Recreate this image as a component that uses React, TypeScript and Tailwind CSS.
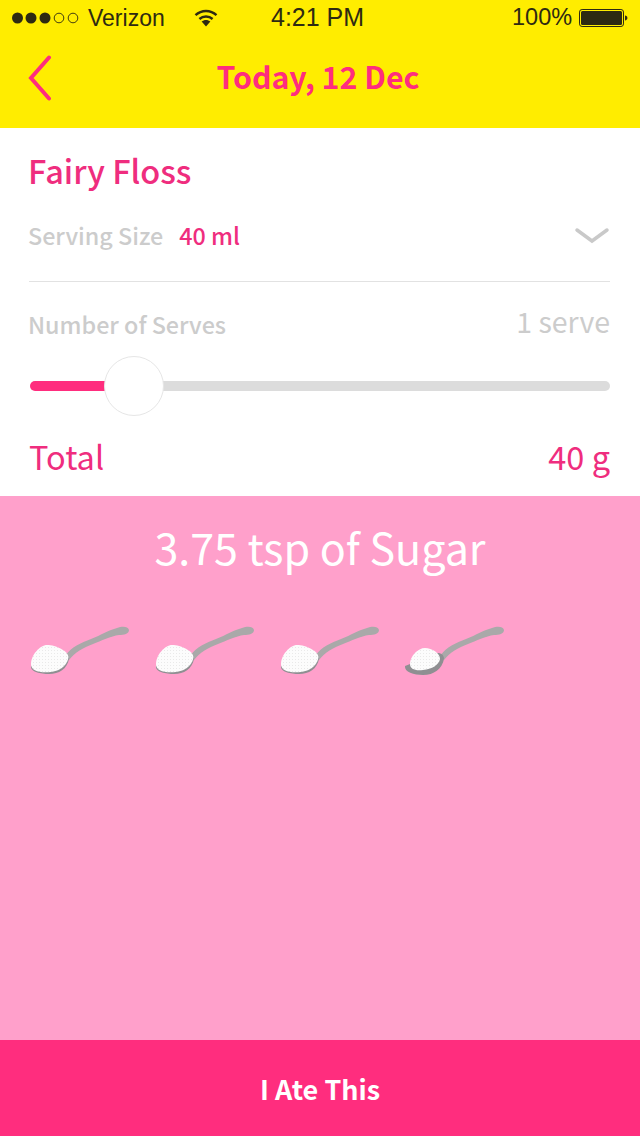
import { useId } from 'react'

const sans = 'font-["Noto_Sans_CJK_JP","Noto_Sans",sans-serif]'

function Dots() {
  const filled = [17.5, 31, 45]
  const empty = [59, 73]
  return (
    <svg width="69" height="14" viewBox="12 0 69 14" className="block">
      {filled.map((x) => (
        <circle key={x} cx={x} cy="7" r="5.5" fill="#2e2a12" />
      ))}
      {empty.map((x) => (
        <circle key={x} cx={x} cy="7" r="4.8" fill="none" stroke="#2e2a12" strokeWidth="0.9" />
      ))}
    </svg>
  )
}

function Wifi() {
  return (
    <svg width="24" height="18" viewBox="0 0 24 18" className="block">
      <path d="M1.500 6.200C7.500 .6 16.500 .6 22.500 6.200" fill="none" stroke="#2e2a12" strokeWidth="2.400" />
      <path d="M5.400 10C9.200 6.600 14.800 6.600 18.600 10" fill="none" stroke="#2e2a12" strokeWidth="2.400" />
      <path d="M7.600 12.600C10.200 10.400 13.800 10.400 16.400 12.600L12 17.600Z" fill="#2e2a12" />
    </svg>
  )
}

function Battery() {
  return (
    <svg width="49" height="20" viewBox="0 0 49 20" className="block">
      <rect x="0.500" y="1.500" width="44" height="17" rx="2.600" fill="none" stroke="#2e2a12" strokeWidth="1" />
      <rect x="2" y="3" width="41" height="14" rx="1.500" fill="#2e2a12" />
      <path d="M46 7.500c1.500.3 2.400 1.200 2.400 2.500s-.9 2.200-2.400 2.500Z" fill="#2e2a12" />
    </svg>
  )
}

// the last spoon is only 3/4 full: smaller heap, more of the bowl showing
function Spoon({ partial = false }: { partial?: boolean }) {
  const id = useId()
  return (
    <svg width="100" height="56" viewBox="0 0 100 56" className="block shrink-0">
      <defs>
        <pattern id={id} width="3" height="3" patternUnits="userSpaceOnUse">
          <rect width="3" height="3" fill="#fcfcfc" />
          <rect x="1" y="1" width="1" height="1" fill="#e9e9e9" />
        </pattern>
      </defs>
      <path
        d="M37 33C42 25 52 21 62 17C72 13 80 8 88 6C93 4 99 4 100 8C100 12 95 13 90 13C82 14 72 19 64 22C54 26 46 30 40 38Z"
        fill="#a9a9a9"
      />
      {partial ? (
        <>
          <path d="M1 44C0 50 10 53 19 53C30 53 38 47 40 37C40 33 37 31 34 31Z" fill="#8f8f92" />
          <path
            d="M6 42C6 34 14 26 21 26C28 26 36 31 36 37C35 43 28 47 19 48C11 49 6 47 6 42Z"
            fill={`url(#${id})`}
          />
        </>
      ) : (
        <>
          <path d="M2 44C1 50 12 52 20 52C30 52 38 47 40 37C40 33 38 32 35 31Z" fill="#8f8f92" />
          <path
            d="M2 42C2 33 11 23 18 23C27 23 39 29 39.500 35C39 42 32 49 22 50C10 51 2 49 2 42Z"
            fill={`url(#${id})`}
          />
        </>
      )}
    </svg>
  )
}

export default function App() {
  return (
    <div className={`flex h-[1136px] w-[640px] flex-col bg-white ${sans}`}>
      <header className="h-[128px] shrink-0 bg-[#ffed00]">
        <div className='flex h-[36px] items-center pl-[12px] font-["Liberation_Sans",sans-serif] text-[23.500px] text-[#2e2a12]'>
          <Dots />
          <span className="ml-[7px] w-[106px] text-[23px]">Verizon</span>
          <Wifi />
          <span className="ml-[53px] w-[241px] text-[25px]">4:21 PM</span>
          <span className="w-[67px]">100%</span>
          <Battery />
        </div>
        <div className="relative flex h-[84px] items-center justify-center pb-[2px] pr-[4px]">
          <svg width="24" height="46" viewBox="0 0 24 46" className="absolute left-[28px] top-[19px]">
            <path d="M21 2.500L3 23L21 43.500" fill="none" stroke="#ff2d7e" strokeWidth="4" strokeLinecap="round" />
          </svg>
          <h1 className="text-[30.300px] font-bold text-[#ff2d7e]">Today, 12 Dec</h1>
        </div>
      </header>

      <section className="h-[368px] shrink-0 pl-[28px] pr-[30px]">
        <h2 className="mt-[20px] h-[44px] text-[32.500px] leading-[44px] font-medium text-[#ef2d7e]">Fairy Floss</h2>
        <div className="mt-[25px] flex h-[36px] items-center">
          <span className="text-[23.300px] font-medium text-[#cccccc]">Serving Size</span>
          <span className="ml-[16px] text-[23.300px] font-medium text-[#ef2d7e]">40 ml</span>
          <svg width="36" height="18" viewBox="0 0 36 18" className="ml-auto mt-[2px]">
            <path d="M3 3L18 14L33 3" fill="none" stroke="#c9c9c9" strokeWidth="3.500" strokeLinecap="round" />
          </svg>
        </div>
        <div className="ml-[1px] mt-[28px] h-px bg-[#e2e2e2]" />
        <div className="mt-[23px] flex h-[36px] items-center justify-between">
          <span className="mt-[3px] text-[23.300px] font-medium text-[#cccccc]">Number of Serves</span>
          <span className="-mt-[3px] text-[28.500px] text-[#cccccc]">1 serve</span>
        </div>
        <div className="relative ml-[2px] mt-[40px] flex h-[10px] items-center">
          <div className="h-[10px] w-[76px] rounded-l-full bg-[#ff2d7e]" />
          <div className="h-[10px] flex-1 rounded-r-full bg-[#dcdcdc]" />
          <div className="absolute left-[74px] top-[-25px] size-[60px] rounded-full border-[1.500px] border-[#e6e6e6] bg-white" />
        </div>
        <div className="ml-[1px] mt-[40px] flex h-[50px] items-center justify-between text-[#ef2d7e]">
          <span className="text-[32.500px]">Total</span>
          <span className="text-[32.500px]">40 g</span>
        </div>
      </section>

      <section className="flex-1 bg-[#ffa0cb]">
        <p className="mt-[20px] text-center text-[43px] leading-[60px] text-white">3.75 tsp of Sugar</p>
        <div className="mt-[46px] flex gap-[25px] pl-[29px]">
          <Spoon />
          <Spoon />
          <Spoon />
          <Spoon partial />
        </div>
      </section>

      <button className="h-[96px] shrink-0 bg-[#ff2d7e] pt-[2px] text-[27px] font-bold text-white">I Ate This</button>
    </div>
  )
}
